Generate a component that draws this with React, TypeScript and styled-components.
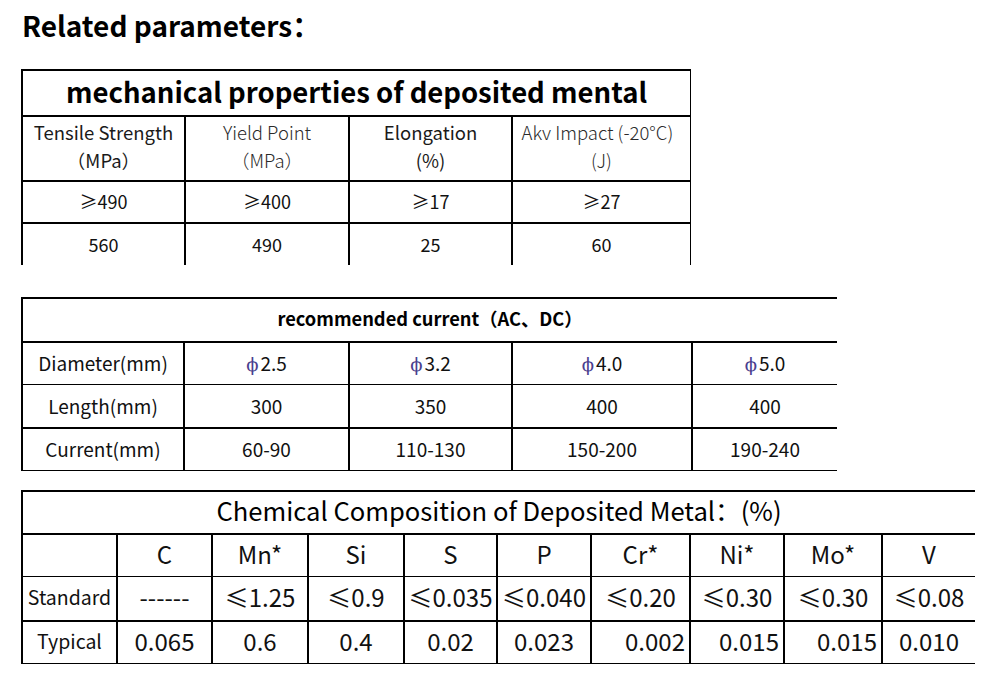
import React from "react";
import styled, { createGlobalStyle } from "styled-components";

const Global = createGlobalStyle`
  html, body { margin: 0; padding: 0; background: #fff; }
  body {
    font-family: "Noto Sans CJK SC", "Noto Sans", sans-serif;
    color: #111;
  }
`;

const Page = styled.div`
  padding: 7px 0 0 21px;
  display: flex;
  flex-direction: column;
  align-items: flex-start;
`;

const Title = styled.h2`
  margin: 0 0 0 1px;
  font-size: 28px;
  font-weight: 700;
  line-height: 36px;
  color: #000;
`;

const Grid = styled.div<{ $cols: string; $mt: number; $right?: boolean; $bottom?: boolean }>`
  display: grid;
  grid-template-columns: ${(p) => p.$cols};
  margin-top: ${(p) => p.$mt}px;
  border-right: ${(p) => (p.$right ? "1px solid #000" : "none")};
  border-bottom: ${(p) => (p.$bottom ? "1px solid #000" : "none")};
`;

const Cell = styled.div<{
  $h: number;
  $top: number;
  $size: number;
  $span?: boolean;
  $weight?: number;
  $align?: "center" | "right";
  $tone?: string;
  $lh?: number;
  $lift?: number;
}>`
  box-sizing: border-box;
  height: ${(p) => p.$h}px;
  border-left: 2px solid #000;
  border-top: ${(p) => p.$top}px solid #000;
  grid-column: ${(p) => (p.$span ? "1 / -1" : "auto")};
  display: flex;
  align-items: center;
  justify-content: ${(p) => (p.$align === "right" ? "flex-end" : "center")};
  padding: 0 ${(p) => (p.$align === "right" ? 4 : 0)}px ${(p) => p.$lift ?? 0}px 0;
  text-align: center;
  white-space: nowrap;
  font-size: ${(p) => p.$size}px;
  font-weight: ${(p) => p.$weight ?? 400};
  line-height: ${(p) => (p.$lh ? `${p.$lh}px` : 1.4)};
  color: ${(p) => p.$tone ?? "#111"};
`;

const Phi = styled.span`
  font-family: "DejaVu Serif", "Liberation Serif", serif;
  font-size: 0.95em;
  color: #4b3f8f;
  margin-right: 2px;
`;

type Row = {
  h: number;
  top: number;
  cells: React.ReactNode[];
  size: number;
  lh?: number;
  lift?: number;
  weights?: number[];
  aligns?: ("center" | "right")[];
  tones?: string[];
};

const mechCols = "163px 164px 163px 179px";
const mechRows: Row[] = [
  {
    h: 65,
    top: 2,
    size: 18.5,
    lh: 28,
    lift: 6,
    weights: [400, 300, 400, 300],
    tones: ["#1a1a1a", "#2a2a2a", "#1a1a1a", "#2a2a2a"],
    cells: [
      <>Tensile Strength<br />（MPa）</>,
      <>Yield Point<br />（MPa）</>,
      <>Elongation<br />(%)</>,
      <>Akv Impact (-20°C)&nbsp;&nbsp;<br />(J)</>,
    ],
  },
  { h: 42, top: 2, size: 18, cells: ["≥490", "≥400", "≥17", "≥27"] },
  { h: 43, top: 2, size: 18, cells: ["560", "490", "25", "60"] },
];

const curCols = "162px 165px 163px 180px 146px";
const curRows: Row[] = [
  {
    h: 43,
    top: 2,
    size: 19,
    cells: [
      "Diameter(mm)",
      <><Phi>ϕ</Phi>2.5</>,
      <><Phi>ϕ</Phi>3.2</>,
      <><Phi>ϕ</Phi>4.0</>,
      <><Phi>ϕ</Phi>5.0</>,
    ],
  },
  { h: 43, top: 1, size: 19, cells: ["Length(mm)", "300", "350", "400", "400"] },
  { h: 43, top: 2, size: 19, cells: ["Current(mm)", "60-90", "110-130", "150-200", "190-240"] },
];

const chemCols = "95px 95px 96px 96px 93px 94px 99px 94px 98px 94px";
const chemRows: Row[] = [
  { h: 43, top: 2, size: 24, lift: 3, cells: ["", "C", "Mn*", "Si", "S", "P", "Cr*", "Ni*", "Mo*", "V"] },
  {
    h: 44,
    top: 1,
    size: 24,
    lift: 3,
    cells: ["Standard", "------", "≤1.25", "≤0.9", "≤0.035", "≤0.040", "≤0.20", "≤0.30", "≤0.30", "≤0.08"],
  },
  {
    h: 43,
    top: 2,
    size: 24,
    lift: 4,
    aligns: ["center", "center", "center", "center", "center", "center", "right", "right", "right", "center"],
    cells: ["Typical", "0.065", "0.6", "0.4", "0.02", "0.023", "0.002", "0.015", "0.015", "0.010"],
  },
];

const renderRows = (rows: Row[], firstSize?: number) =>
  rows.map((r, ri) =>
    r.cells.map((c, ci) => (
      <Cell
        key={`${ri}-${ci}`}
        $h={r.h}
        $top={r.top}
        $lh={r.lh}
        $lift={r.lift}
        $size={ci === 0 && firstSize ? firstSize : r.size}
        $weight={r.weights?.[ci]}
        $align={r.aligns?.[ci]}
        $tone={r.tones?.[ci]}
      >
        <span>{c}</span>
      </Cell>
    ))
  );

export default function App() {
  return (
    <>
      <Global />
      <Page>
        <Title>Related parameters：</Title>

        <Grid $cols={mechCols} $mt={26} $right>
          <Cell $span $h={46} $top={2} $size={27.5} $weight={700} $tone="#000" $lift={4}>
            mechanical properties of deposited mental
          </Cell>
          {renderRows(mechRows)}
        </Grid>

        <Grid $cols={curCols} $mt={32} $bottom>
          <Cell $span $h={44} $top={2} $size={18.3} $weight={700} $tone="#000" $lift={2}>
            recommended current（AC、DC）
          </Cell>
          {renderRows(curRows, 19)}
        </Grid>

        <Grid $cols={chemCols} $mt={19} $bottom>
          <Cell $span $h={43} $top={2} $size={25.6} $tone="#000" $lift={5}>
            Chemical Composition of Deposited Metal：(%)
          </Cell>
          {renderRows(chemRows, 19.5)}
        </Grid>
      </Page>
    </>
  );
}
